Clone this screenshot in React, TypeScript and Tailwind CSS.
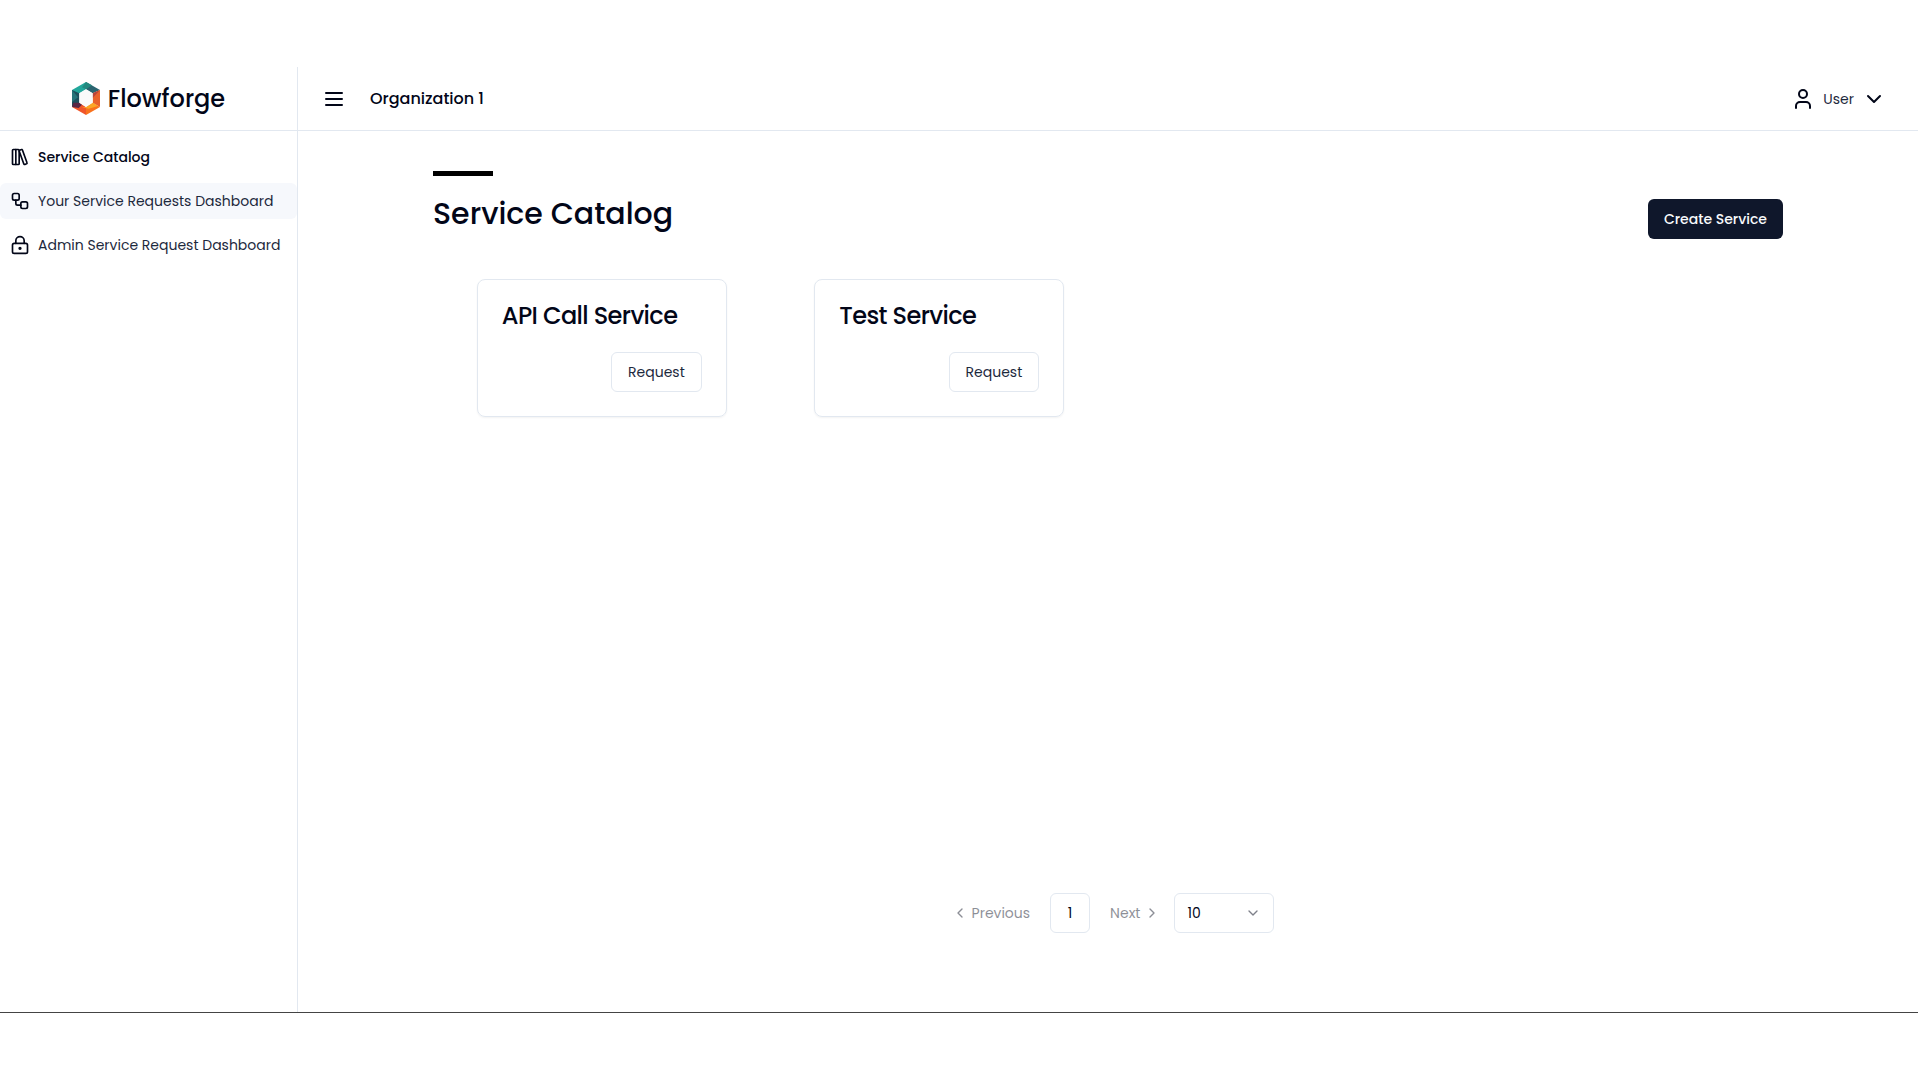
import { useState } from "react";
import type { ComponentType } from "react";
import {
  ChevronDown,
  ChevronLeft,
  ChevronRight,
  LibraryBig,
  LockKeyhole,
  User,
  Workflow,
} from "lucide-react";

type NavEntry = {
  label: string;
  icon: ComponentType<{ className?: string }>;
  state?: "current" | "hovered";
};

const navEntries: NavEntry[] = [
  { label: "Service Catalog", icon: LibraryBig, state: "current" },
  { label: "Your Service Requests Dashboard", icon: Workflow, state: "hovered" },
  { label: "Admin Service Request Dashboard", icon: LockKeyhole },
];

const services = ["API Call Service", "Test Service"];

function Logo() {
  return (
    <svg viewBox="0 0 84 99" className="h-[33px] w-7" aria-hidden="true">
      <path d="M42 0 0 24 0 38 22 34 42 22Z" fill="#22a79b" />
      <path d="M42 0 84 24 62 34 42 22Z" fill="#2b6470" />
      <path d="M42 0 60 10 42 22 30 16Z" fill="#23897f" />
      <path d="M0 24 22 34 22 62 0 75Z" fill="#1d4f5c" />
      <path d="M0 24 18 46 0 60Z" fill="#26747a" />
      <path d="M84 24 84 75 62 62 62 34Z" fill="#e9612c" />
      <path d="M84 24 62 34 62 48Z" fill="#b8443c" />
      <path d="M0 75 22 62 42 75 42 99Z" fill="#f0562a" />
      <path d="M0 75 4 62 22 62 30 68 20 78Z" fill="#5a2745" />
      <path d="M84 75 42 99 42 75 62 62Z" fill="#f9721d" />
      <path d="M30 76 42 75 62 62 78 72 50 80Z" fill="#fba526" />
      <path d="M42 22 62 34 62 62 42 75 22 62 22 34Z" fill="#fafafa" />
    </svg>
  );
}

function MenuIcon() {
  return (
    <svg
      viewBox="0 0 24 24"
      className="size-6"
      fill="none"
      stroke="currentColor"
      strokeWidth="2"
      strokeLinecap="round"
      aria-hidden="true"
    >
      <path d="M4 6h16M4 12h16M4 18h16" />
    </svg>
  );
}

function Sidebar() {
  return (
    <aside className="flex w-[298px] shrink-0 flex-col border-r border-slate-200">
      <div className="flex h-16 items-center justify-center gap-2 border-b border-slate-200">
        <Logo />
        <span className="text-2xl font-medium">Flowforge</span>
      </div>
      <nav className="mt-2 flex flex-col gap-2">
        {navEntries.map(({ label, icon: Icon, state }) => (
          <a
            key={label}
            href="#"
            aria-current={state === "current" ? "page" : undefined}
            className={`flex h-9 items-center gap-2 whitespace-nowrap rounded-md pl-2.5 text-sm hover:bg-slate-100 ${
              state === "current" ? "font-medium" : "text-slate-800"
            } ${state === "hovered" ? "bg-[#f6f8fc]" : ""}`}
          >
            <Icon className="size-5 shrink-0 text-slate-950" />
            {label}
          </a>
        ))}
      </nav>
    </aside>
  );
}

function TopBar() {
  return (
    <header className="flex h-16 shrink-0 items-center border-b border-slate-200 pl-6 pr-8">
      <button type="button" aria-label="Toggle navigation">
        <MenuIcon />
      </button>
      <span className="ml-6 text-base font-medium">Organization 1</span>
      <button type="button" className="ml-auto flex items-center gap-2 text-sm text-slate-800">
        <User className="size-6 text-slate-950" />
        User
        <ChevronDown className="size-6 text-slate-950" />
      </button>
    </header>
  );
}

function ServiceCard({ name }: { name: string }) {
  return (
    <article className="flex w-[250px] flex-col gap-6 rounded-lg border border-slate-200 p-6 shadow-xs">
      <h2 className="whitespace-nowrap text-2xl/6 font-medium tracking-tight">{name}</h2>
      <button
        type="button"
        className="h-10 self-end rounded-md border border-slate-200 px-4 text-sm text-slate-800"
      >
        Request
      </button>
    </article>
  );
}

function Pagination() {
  const [pageSize, setPageSize] = useState("10");
  return (
    <div className="mt-auto flex items-center justify-center gap-1 text-sm">
      <button
        type="button"
        disabled
        className="flex h-10 items-center gap-1 pl-2.5 pr-4 opacity-45"
      >
        <ChevronLeft className="size-4" />
        Previous
      </button>
      <button
        type="button"
        aria-current="page"
        className="size-10 rounded-md border border-slate-200"
      >
        1
      </button>
      <button
        type="button"
        disabled
        className="flex h-10 items-center gap-1 pl-4 pr-2.5 opacity-45"
      >
        Next
        <ChevronRight className="size-4" />
      </button>
      <div className="relative">
        <select
          aria-label="Services per page"
          value={pageSize}
          onChange={(event) => setPageSize(event.target.value)}
          className="h-10 w-[100px] appearance-none rounded-md border border-slate-200 bg-white px-3"
        >
          <option>10</option>
          <option>20</option>
          <option>50</option>
        </select>
        <ChevronDown className="pointer-events-none absolute right-[13px] top-3 size-4 opacity-50" />
      </div>
    </div>
  );
}

export default function App() {
  return (
    <div className="flex min-h-screen flex-col bg-white pb-[66px] pt-[67px] font-[Poppins,Inter,sans-serif] text-slate-950">
      <div className="flex grow border-b border-[#444444]">
        <Sidebar />
        <div className="flex min-w-0 grow flex-col">
          <TopBar />
          <main className="mx-auto flex w-10/12 grow flex-col pb-[79px] pt-10">
            <div className="h-[5px] w-15 bg-black" />
            <div className="mt-5 flex items-end justify-between">
              <h1 className="mb-[7px] text-3xl font-medium">Service Catalog</h1>
              <button
                type="button"
                className="h-10 rounded-md bg-slate-900 px-4 text-sm font-medium text-slate-50"
              >
                Create Service
              </button>
            </div>
            <div className="mt-10 grid grid-cols-4 justify-items-center">
              {services.map((name) => (
                <ServiceCard key={name} name={name} />
              ))}
            </div>
            <Pagination />
          </main>
        </div>
      </div>
    </div>
  );
}
